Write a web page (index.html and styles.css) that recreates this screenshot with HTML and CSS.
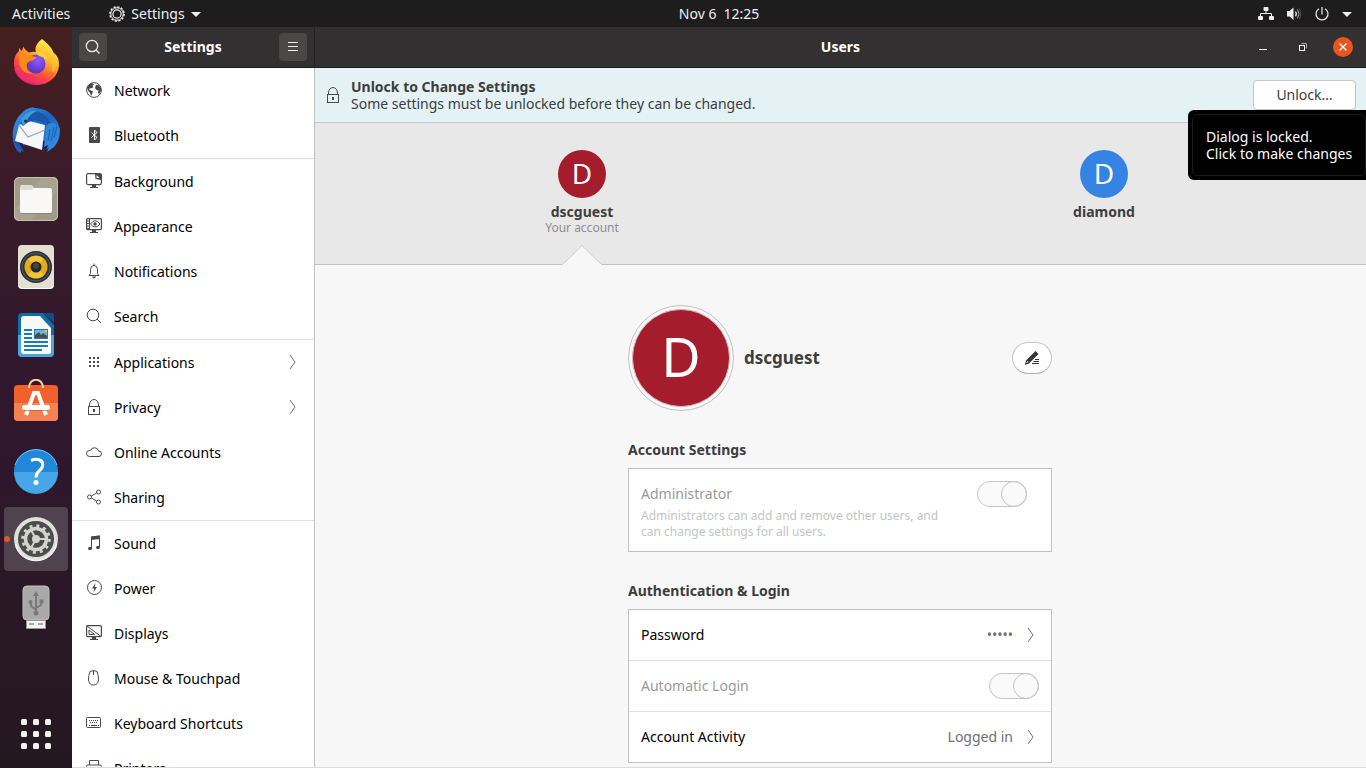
FILE: index.html
```html
<!DOCTYPE html>
<html lang="en">
<head>
<meta charset="utf-8">
<title>Settings - Users</title>
<meta name="viewport" content="width=device-width, initial-scale=1">
<link rel="stylesheet" href="styles.css">
</head>
<body>
<header class="topbar">
  <div class="topbar-left">
    <button class="top-btn">Activities</button>
    <button class="top-btn app-menu">
      <svg width="16" height="16" viewBox="0 0 16 16" fill="none" stroke="#eee"><circle cx="8" cy="8" r="7.1" stroke-width="1.5" stroke-dasharray="2.2 1.52"/><circle cx="8" cy="8" r="6.2"/><circle cx="8" cy="8" r="4.1" stroke-width="1.2"/></svg>
      Settings
      <svg width="10" height="16" viewBox="0 0 10 16"><path d="M0 6h10L5 11z" fill="#eee"/></svg>
    </button>
  </div>
  <button class="top-btn clock"><span>Nov 6</span><span>12:25</span></button>
  <button class="top-btn tray" aria-label="System menu">
    <svg width="16" height="16" viewBox="0 0 16 16" fill="#eee"><rect x="5.5" y="1" width="5" height="4" rx="1"/><rect x="0" y="10" width="5" height="4" rx="1"/><rect x="11" y="10" width="5" height="4" rx="1"/><path d="M2.5 10V7.5h11V10M8 5v3" fill="none" stroke="#eee"/></svg>
    <svg width="16" height="16" viewBox="0 0 16 16" fill="none" stroke="#eee"><path d="M1 5h2.5L7.500 1.500V14L3.500 10.500H1z" fill="#eee" stroke="none"/><path d="M9.500 5.500q1.600 2.300 0 4.800" stroke-width="1.300"/><path d="M11.500 3.500q3 4.300 0 8.800" stroke="#aaa"/><path d="M13 2.500q3.500 5.300 0 10.800" stroke="#555"/></svg>
    <svg width="16" height="16" viewBox="0 0 16 16" fill="none" stroke="#eee" stroke-width="1.200"><path d="M8 1v7.500M5 2.700a6 6 0 1 0 6 0"/></svg>
    <svg width="10" height="16" viewBox="0 0 10 16"><path d="M0 6h10L5 11z" fill="#eee"/></svg>
  </button>
</header>

<div class="desktop">
  <nav class="dock" aria-label="Applications">
    <button class="dock-item" aria-label="Firefox">
      <svg width="48" height="48" viewBox="0 0 48 48">
        <defs><linearGradient id="ff" x1=".85" y1=".1" x2=".3" y2="1"><stop offset="0" stop-color="#fff44f"/><stop offset=".35" stop-color="#ffb327"/><stop offset=".65" stop-color="#ff5634"/><stop offset="1" stop-color="#e3118b"/></linearGradient><radialGradient id="fp" cx=".6" cy=".3" r=".8"><stop offset="0" stop-color="#9059ff"/><stop offset="1" stop-color="#4f2fb5"/></radialGradient></defs>
        <path d="M30 0c5 4 10 9 11.500 13.500C45.500 17 47 20 47 25c0 12-10 21-22.500 21S2 36.500 2 24.500c0-6 2-10 5-12.500V9l3 3 1.500-4.500c1 3 3 4.500 5.500 6 2.500-.8 5-1 7-.5C22 8 26 3 30 0z" fill="url(#ff)"/>
        <path d="M42 14c5 11 1 22-9 26 7-5 9-12 6-20" fill="#ffc53a" opacity=".6"/>
        <circle cx="24" cy="25" r="9.500" fill="url(#fp)"/>
        <path d="M7 15c4-.5 8-.5 11 1.500 2 1 5 1 6.500 1.800-1 2-3 3-7 4-2 1.500-3 2-3 5 0 4 3 6.500 7 7C11 36 6 29 7 15z" fill="#ff8a16"/>
        <path d="M24 13c5-1 11 2 12 9-3-4-6-4-9-5-1-1-2-2.500-3-4z" fill="#ffd03a"/>
        <path d="M4 30c3 8 10 12 19 12s15-4 18-9" fill="none" stroke="#ff3a58" stroke-width="4" opacity=".45"/>
      </svg>
    </button>
    <button class="dock-item" aria-label="Thunderbird">
      <svg width="48" height="48" viewBox="0 0 48 48">
        <defs><linearGradient id="tb" x1="0" y1="0" x2="1" y2="1"><stop offset="0" stop-color="#3aa0e8"/><stop offset=".5" stop-color="#1a62c0"/><stop offset="1" stop-color="#3d9bea"/></linearGradient></defs>
        <path d="M10 6c2-3 6-5 12-6l-1 1c8 0 15 2 20 8 9 9 9 22 1 31l-7 5 2-5-6 5 1-5-20-2-4 8C-2 39-2 16 10 6z" fill="url(#tb)"/>
        <path d="M4 32c2 5 6 9 9 12-1-2-2-5-2-8l16 5 5 1c-2 3-3 4-5 5 8-3 11-9 11-16l-8 4z" fill="#211d57"/>
        <path d="M7 18l10-4 16 4-3 25L3 34z" fill="#f6f7fa"/><path d="M7 18l9 12 17-7" fill="none" stroke="#9ba1ad" stroke-width="1.200"/>
        <path d="M9 17C9 6 18 1 27 5c7 3 11 8 14 14-4 1-6 0-8-2-7-4-13-4-18-1l-4 3z" fill="#1d58a8"/>
        <path d="M9 13c3-7 9-10 16-9-5 2-8 5-10 9-1 3-2 4-4 6z" fill="#3c9de0"/><circle cx="13.500" cy="14" r="1.500" fill="#1e2440"/>
        <path d="M34 20l-2 20 4-2-1 4 10-11 3-9c-3-6-11-9-14-2z" fill="#2f86d8"/><path d="M38 22l-2 12m6-14-3 14m6-15-3 12" stroke="#1a5cb5" fill="none"/>
        <path d="M0 28l3 9 5 6 4 2-5-9-4-2z" fill="#1a57ae"/>
      </svg>
    </button>
    <button class="dock-item" aria-label="Files">
      <svg width="48" height="48" viewBox="0 0 48 48"><rect x="2" y="2" width="44" height="44" rx="5" fill="#a09a88"/><path d="M2 35L30 2h11q5 0 5 5v9L18 46H7q-5 0-5-5z" fill="#aea896" opacity=".6"/><rect x="2.500" y="2.500" width="43" height="43" rx="5" fill="none" stroke="#c5bfae"/><path d="M8 12q0-2 2-2h9q2 0 3 3l1 2H8z" fill="#dfdcd2"/><path d="M8 15h12l2-2h16q2 0 2 2v21q0 2-2 2H10q-2 0-2-2z" fill="#f9f8f6"/><path d="M9 38.500h30" stroke="#79745f" opacity=".5"/></svg>
    </button>
    <button class="dock-item" aria-label="Rhythmbox">
      <svg width="48" height="48" viewBox="0 0 48 48"><rect x="6" y="2" width="36" height="44" rx="4" fill="#e3dfd3"/><path d="M7 43q1 2.500 3 2.500h28q2 0 3-2.500" fill="none" stroke="#fff"/><circle cx="24" cy="24" r="16" fill="#303138"/><circle cx="24" cy="24" r="14" fill="none" stroke="#585b68"/><circle cx="24" cy="24" r="11.500" fill="#e3ad18"/><path d="M24 24L16 16a11.500 11.500 0 0 1 16 0zM24 24l8 8a11.500 11.500 0 0 1-16 0z" fill="#f3cf4c" opacity=".7"/><circle cx="24" cy="24" r="5.500" fill="#262626"/><circle cx="24" cy="23" r="3" fill="#454545"/></svg>
    </button>
    <button class="dock-item" aria-label="LibreOffice Writer">
      <svg width="48" height="48" viewBox="0 0 48 48"><path d="M10 2h21l11 12v28q0 4-4 4H10q-4 0-4-4V6q0-4 4-4z" fill="#0e6daa"/><path d="M6 24h36v18q0 4-4 4H10q-4 0-4-4z" fill="#4aa5dc"/><path d="M31 2h9q2 0 2 2v8z" fill="#0c4f80"/><path d="M12 5h16l11 12v24q0 2-2 2H12q-3 0-3-3V8q0-3 3-3z" fill="#f9f9f9"/><path d="M12 19h8M12 23h8M12 27h8M12 31h24M12 35h24M12 39h18" stroke="#1b7db8" stroke-width="2"/><rect x="22" y="18" width="14" height="10" fill="#1b7db8"/><rect x="23" y="19" width="12" height="8" fill="#69b6e4"/><path d="M32 19h3v3z" fill="#f5d525"/><path d="M23 27v-3l4-3 2 3 2-2 4 3v2z" fill="#4c4c4c"/></svg>
    </button>
    <button class="dock-item" aria-label="Ubuntu Software">
      <svg width="48" height="48" viewBox="0 0 48 48"><rect x="2" y="6" width="44" height="36" rx="4" fill="#f1612b"/><path d="M2 24h44v14q0 4-4 4H6q-4 0-4-4z" fill="#f58151"/><path d="M17 9C17-2 31-2 31 9" fill="none" stroke="#f4d5a0" stroke-width="2"/><path d="M14 36l8-22h4l8 22" fill="none" stroke="#fff" stroke-width="4"/><rect x="10" y="26" width="28" height="5" rx="2.500" fill="#fff"/><path d="M12 31.500h24" stroke="#c94c1c" opacity=".6"/></svg>
    </button>
    <button class="dock-item" aria-label="Help">
      <svg width="48" height="48" viewBox="0 0 48 48"><circle cx="24" cy="24" r="22" fill="#2187d8"/><path d="M2 25h44a22 22 0 0 1-44 0z" fill="#46a6e7"/><path d="M3 18a22 22 0 0 1 42 0" fill="none" stroke="#6dbaf2"/><path d="M19 13.500q5-2 8.500-.5c5 2 3.500 8 0 10.500-2.500 2-3.500 3.500-3.500 7" fill="none" stroke="#fff" stroke-width="3"/><circle cx="24" cy="35.500" r="2.500" fill="#fff"/></svg>
    </button>
    <button class="dock-item active" aria-label="Settings">
      <svg width="48" height="48" viewBox="0 0 48 48"><circle cx="24" cy="24" r="22" fill="#dededa"/><path d="M3.500 29a21 21 0 0 0 41 0" fill="none" stroke="#f2f2f0" stroke-width="1.500"/><circle cx="24" cy="24" r="18" fill="#4b4c4b"/><circle cx="24" cy="24" r="13.300" fill="none" stroke="#d3d3cf" stroke-width="3" stroke-dasharray="3 3.964"/><circle cx="24" cy="24" r="10.500" fill="none" stroke="#d3d3cf" stroke-width="3.500"/><circle cx="24" cy="24" r="4" fill="#d3d3cf"/><path d="M24 24h10M24 24l-5-9M24 24l-5 9" stroke="#d3d3cf" stroke-width="2"/></svg>
    </button>
    <button class="dock-item" aria-label="USB drive">
      <svg width="48" height="48" viewBox="0 0 48 48"><rect x="11" y="3" width="26" height="34" rx="4" fill="#a9a9a9" stroke="#c0c0c0"/><path d="M14.500 37.500h19v8h-19z" fill="#f3f3f3" stroke="#999"/><path d="M17 41h5m4 0h5" stroke="#a6a6a6" stroke-width="2"/><path d="M24 12v18M24 27l-5-4v-4M24 25l5-3v-4" fill="none" stroke="#7a7a7a" stroke-width="2"/><path d="M21 13h6l-3-5z" fill="#7a7a7a"/><circle cx="24" cy="30" r="2.500" fill="#7a7a7a"/><circle cx="18.500" cy="19" r="2" fill="#7a7a7a"/><rect x="27.500" y="16.500" width="4" height="4" fill="#7a7a7a"/></svg>
    </button>
    <button class="dock-item apps" aria-label="Show applications">
      <svg width="48" height="48" viewBox="0 0 48 48" fill="#f2f2f0"><rect x="9" y="9" width="6" height="6" rx="1.500"/><rect x="21" y="9" width="6" height="6" rx="1.500"/><rect x="33" y="9" width="6" height="6" rx="1.500"/><rect x="9" y="21" width="6" height="6" rx="1.500"/><rect x="21" y="21" width="6" height="6" rx="1.500"/><rect x="33" y="21" width="6" height="6" rx="1.500"/><rect x="9" y="33" width="6" height="6" rx="1.500"/><rect x="21" y="33" width="6" height="6" rx="1.500"/><rect x="33" y="33" width="6" height="6" rx="1.500"/></svg>
    </button>
  </nav>

  <div class="window">
    <aside class="side">
      <div class="titlebar">
        <button class="tool" aria-label="Search"><svg width="16" height="16" viewBox="0 0 16 16" fill="none" stroke="#eee" stroke-width="1.200"><circle cx="7" cy="7" r="5.700"/><path d="M11 11l3.500 3.500"/></svg></button>
        <h2 class="title">Settings</h2>
        <button class="tool" aria-label="Menu"><svg width="16" height="16" viewBox="0 0 16 16" stroke="#eee"><path d="M3 3.500h10M3 7.500h10M3 11.500h10"/></svg></button>
      </div>
      <nav class="nav" aria-label="Settings panels">
        <a class="nav-row" href="#network"><svg class="ic" viewBox="0 0 16 16"><circle cx="8" cy="8" r="7.400" fill="none" stroke="#4a4a4a"/><path d="M1 6C1.500 4 3 2 5.500 1.200L8 2 6.500 4l1 1L5 6.500 4 6 3 7.500l2 1L7 9.500 6 12l-.8 2L4 11 2 8.500zM10 3l3 .3 2 3L15 9l-1.800 3-1.200-1 .5-2.500L10.500 8 9 6z" fill="#4a4a4a"/></svg>Network</a>
        <a class="nav-row" href="#bluetooth"><svg class="ic" viewBox="0 0 16 16"><rect x="3" y="0" width="11" height="16" rx="1" fill="#4a4a4a"/><path d="M5.500 5.500l5.500 5-2.500 2.500V3L11 5.500l-5.500 5" fill="none" stroke="#fff"/></svg>Bluetooth</a>
        <hr class="nav-sep">
        <a class="nav-row" href="#background"><svg class="ic" viewBox="0 0 16 16"><rect x=".6" y=".6" width="14.800" height="11" rx="1.500" fill="none" stroke="#4a4a4a" stroke-width="1.200"/><path d="M9 1h6v6L9.500 6z" fill="#4a4a4a"/><path d="M10.500 2v3h3z" fill="#fff"/><path d="M6 12h4v2h2v1H4v-1h2z" fill="#4a4a4a"/></svg>Background</a>
        <a class="nav-row" href="#appearance"><svg class="ic" viewBox="0 0 16 16"><rect x=".6" y=".6" width="14.800" height="11" rx="1" fill="none" stroke="#4a4a4a" stroke-width="1.200"/><path d="M0 3h4M0 5.500h4M0 8h4M0 10.500h4M3.500 1v11" stroke="#4a4a4a"/><path d="M4.500 6Q9-.5 14 6 9 12 4.500 6z" fill="none" stroke="#4a4a4a"/><circle cx="9" cy="6" r="1.700" fill="#4a4a4a"/><path d="M6 12h4v2h2v1H4v-1h2z" fill="#4a4a4a"/></svg>Appearance</a>
        <a class="nav-row" href="#notifications"><svg class="ic line" viewBox="0 0 16 16"><path d="M3 12.500l1.500-2V6.500a3.500 4 0 0 1 7 0v4l1.500 2zM8 2.500v-2"/><path d="M6.500 14h3L8 15z" fill="#4a4a4a"/></svg>Notifications</a>
        <a class="nav-row" href="#search"><svg class="ic line" viewBox="0 0 16 16"><circle cx="7" cy="7" r="5.800"/><path d="M11 11l4 4"/></svg>Search</a>
        <hr class="nav-sep">
        <a class="nav-row" href="#applications"><svg class="ic" viewBox="0 0 16 16"><path d="M3 4h10M3 8h10M3 12h10" stroke="#4a4a4a" stroke-width="2" stroke-dasharray="2"/></svg>Applications<svg class="chev" viewBox="0 0 8 16"><path d="M1 1l5 7-5 7"/></svg></a>
        <a class="nav-row" href="#privacy"><svg class="ic line" viewBox="0 0 16 16"><rect x="2.500" y="7.500" width="11" height="8"/><path d="M3.500 7.500V6a4.500 5.500 0 0 1 9 0v1.500"/><path d="M8 10v3" stroke-width="2"/></svg>Privacy<svg class="chev" viewBox="0 0 8 16"><path d="M1 1l5 7-5 7"/></svg></a>
        <a class="nav-row" href="#online-accounts"><svg class="ic line" viewBox="0 0 16 16"><path d="M3.500 12.500a3 3 0 0 1 0-6c.5 0 1 .1 1 .1a4.200 4.200 0 0 1 8.100.5 2.700 2.700 0 0 1 .4 5.400z"/></svg>Online Accounts</a>
        <a class="nav-row" href="#sharing"><svg class="ic line" viewBox="0 0 16 16"><circle cx="3.500" cy="8" r="2"/><circle cx="12.500" cy="3" r="2"/><circle cx="12.500" cy="13" r="2"/><path d="M5.300 7l5.400-3M5.300 9l5.400 3"/></svg>Sharing</a>
        <hr class="nav-sep">
        <a class="nav-row" href="#sound"><svg class="ic" viewBox="0 0 16 16"><path d="M5.500 13V2l8-1v11" fill="none" stroke="#4a4a4a"/><path d="M5 1.500l9-1V4L5 5z" fill="#4a4a4a"/><ellipse cx="4" cy="13.500" rx="2" ry="1.700" fill="#4a4a4a"/><ellipse cx="12" cy="12.500" rx="2" ry="1.700" fill="#4a4a4a"/></svg>Sound</a>
        <a class="nav-row" href="#power"><svg class="ic line" viewBox="0 0 16 16"><circle cx="8.500" cy="7.500" r="7"/><path d="M9.500 3L6 8.500h2.200L7.500 12.500 11 7H8.800z" fill="#4a4a4a" stroke="none"/></svg>Power</a>
        <a class="nav-row" href="#displays"><svg class="ic" viewBox="0 0 16 16"><rect x=".6" y=".6" width="14.800" height="11" rx="1" fill="none" stroke="#4a4a4a" stroke-width="1.200"/><path d="M1 1l14 10.500M3 5v4.500h5.500z" fill="none" stroke="#4a4a4a"/><path d="M6 12h4v2h2v1H4v-1h2z" fill="#4a4a4a"/></svg>Displays</a>
        <a class="nav-row" href="#mouse"><svg class="ic line" viewBox="0 0 16 16"><path d="M4 1.500Q7.500-.5 11 1.500q1.500 4 1.500 7.500 0 6-5 6t-5-6q0-3.500 1.500-7.500zM7.500 1v4"/></svg>Mouse &amp; Touchpad</a>
        <a class="nav-row" href="#keyboard"><svg class="ic line" viewBox="0 0 16 16"><rect x=".5" y="2.500" width="14" height="10" rx="1"/><path d="M3 5.500h10M4 7.500h8" stroke-dasharray="1 1"/><path d="M3 10.500h1m1 0h6m1 0h1"/></svg>Keyboard Shortcuts</a>
        <a class="nav-row" href="#printers"><svg class="ic line" viewBox="0 0 16 16"><path d="M3.500 5V.500h9V5M2.500 12.500h-2v-6q0-1.500 1.500-1.500h12q1.500 0 1.500 1.500v6h-2M3.500 10.500h9v4h-9z"/></svg>Printers</a>
      </nav>
    </aside>

    <main class="main">
      <div class="titlebar main-titlebar">
        <h1 class="title">Users</h1>
        <div class="win-controls">
          <button class="win-btn" aria-label="Minimize"><svg width="20" height="20" viewBox="0 0 20 20"><path d="M6 12.500h8" stroke="#fff"/></svg></button>
          <button class="win-btn" aria-label="Restore"><svg width="20" height="20" viewBox="0 0 20 20" fill="none"><path d="M8.500 6.500h5v5" stroke="#aaa"/><rect x="6.500" y="8.500" width="5" height="5" stroke="#fff"/></svg></button>
          <button class="win-btn" aria-label="Close"><svg width="20" height="20" viewBox="0 0 20 20"><circle cx="10" cy="10" r="10" fill="#e95420"/><path d="M6.500 6.500l7 7M13.500 6.500l-7 7" stroke="#fff" stroke-width="1.400"/></svg></button>
        </div>
      </div>

      <div class="infobar">
        <svg class="ic line" viewBox="0 0 16 16"><rect x="2.500" y="7.500" width="11" height="8"/><path d="M3.500 7.500V6a4.500 5.500 0 0 1 9 0v1.500"/><path d="M8 10v3" stroke-width="2"/></svg>
        <div class="info-text"><strong>Unlock to Change Settings</strong><p>Some settings must be unlocked before they can be changed.</p></div>
        <div class="unlock-wrap">
          <button class="unlock" aria-describedby="tip">Unlock…</button>
          <div class="tooltip" id="tip" role="tooltip"><p>Dialog is locked.<br>Click to make changes</p></div>
        </div>
      </div>

      <div class="users">
        <button class="user selected"><span class="avatar red">D</span><strong>dscguest</strong><small>Your account</small><svg class="arrow" width="40" height="20" viewBox="0 0 40 20"><path d="M0 20L20 .500 40 20z" fill="#f7f7f7"/><path d="M.500 19.500L20 .700 39.500 19.500" fill="none" stroke="#cfcfcf"/></svg></button>
        <button class="user"><span class="avatar blue">D</span><strong>diamond</strong></button>
      </div>

      <div class="panel">
        <section class="profile">
          <button class="photo" aria-label="Change picture"><span class="photo-in">D</span></button>
          <strong class="name">dscguest</strong>
          <button class="edit" aria-label="Edit name"><svg width="16" height="16" viewBox="0 0 16 16"><path d="M1 15l1-4.500L11.500 1l3 3L5 13.500z" fill="#363636"/><path d="M2 13l1.500-2 1 1z" fill="#fff"/><path d="M11 9.500h4M9.500 11.500H15M8 13.500h7" stroke="#363636"/></svg></button>
        </section>

        <section class="group">
          <h2 class="heading">Account Settings</h2>
          <div class="card admin">
            <div class="admin-top"><label for="admin">Administrator</label><input class="switch" id="admin" type="checkbox" role="switch" checked disabled></div>
            <p class="desc">Administrators can add and remove other users, and can change settings for all users.</p>
          </div>
        </section>

        <section class="group">
          <h2 class="heading">Authentication &amp; Login</h2>
          <div class="card">
            <button class="row"><span>Password</span><span class="value dots">•••••</span><svg class="chev" viewBox="0 0 8 16"><path d="M1 1l5 7-5 7"/></svg></button>
            <div class="row off"><label for="auto">Automatic Login</label><input class="switch" id="auto" type="checkbox" role="switch" checked disabled></div>
            <button class="row"><span>Account Activity</span><span class="value">Logged in</span><svg class="chev" viewBox="0 0 8 16"><path d="M1 1l5 7-5 7"/></svg></button>
          </div>
        </section>
      </div>
    </main>
  </div>
</div>
</body>
</html>
```
FILE: styles.css
```css
* { box-sizing: border-box; }
body {
  margin: 0;
  height: 100vh;
  display: flex;
  flex-direction: column;
  overflow: hidden;
  font: 14px/17px "Noto Sans", "Open Sans", sans-serif;
  color: #3d3d3d;
  background: #fff;
}
button { font: inherit; color: inherit; background: none; border: 0; padding: 0; margin: 0; }
h1, h2, p, hr { margin: 0; }
svg { display: block; flex: none; }
.ic { width: 16px; height: 16px; }
.line { fill: none; stroke: #4a4a4a; }
.chev { width: 8px; height: 16px; fill: none; stroke: #707070; }

.topbar {
  flex: none;
  height: 27px;
  display: grid;
  grid-template-columns: 72px 1fr auto 1fr;
  align-items: center;
  background: #1d1d1d;
  color: #eee;
}
.topbar-left { grid-column: 1 / 3; display: flex; gap: 39px; padding-left: 12px; }
.top-btn { display: flex; align-items: center; white-space: nowrap; }
.app-menu { gap: 6px; }
.clock { gap: 7px; }
.tray { justify-self: end; gap: 12px; padding-right: 14px; }

.desktop { flex: 1; min-height: 0; display: flex; }
.dock {
  flex: none;
  width: 72px;
  display: flex;
  flex-direction: column;
  align-items: center;
  gap: 4px;
  padding: 4px 0 2px;
  background: linear-gradient(#46201f, #381a2b 25%, #2f172e 55%, #241820);
}
.dock-item { flex: none; width: 64px; height: 64px; display: grid; place-items: center; border-radius: 4px; }
.dock-item.active { position: relative; background: #514250; }
.dock-item.active::before {
  content: "";
  position: absolute;
  left: 0;
  top: 29px;
  width: 6px;
  height: 6px;
  border-radius: 50%;
  background: #e95420;
}
.apps { margin-top: auto; }

.window { flex: 1; min-width: 0; display: flex; border-bottom: 1px solid #dcdcdc; }
.side { flex: none; width: 243px; display: flex; flex-direction: column; border-right: 1px solid #c0c0c0; background: #fff; }
.titlebar {
  flex: none;
  height: 41px;
  display: flex;
  align-items: center;
  justify-content: space-between;
  padding: 0 7px;
  background: #323030;
  border-bottom: 1px solid #1c1b1b;
  color: #fff;
}
.side .titlebar { margin-right: -1px; border-right: 1px solid #232222; }
.title { font-size: 14px; line-height: 20px; font-weight: 700; }
.tool { width: 28px; height: 28px; display: grid; place-items: center; border-radius: 4px; background: #4a4847; }
.nav { flex: 1; min-height: 0; overflow: hidden; }
.nav-row { display: flex; align-items: center; gap: 12px; height: 45px; padding: 0 17px 0 14px; color: #000; text-decoration: none; }
.nav-row svg { margin-bottom: 1px; }
.nav-row .chev { margin-left: auto; }
.nav-sep { height: 1px; border: 0; background: #dfdfdf; }

.main { flex: 1; min-width: 0; display: flex; flex-direction: column; background: #f7f7f7; }
.main-titlebar { display: grid; grid-template-columns: 1fr auto 1fr; padding: 0 3px; }
.main-titlebar .title { grid-column: 2; }
.win-controls { justify-self: end; display: flex; }
.win-btn { width: 40px; height: 28px; display: grid; place-items: center; }

.infobar {
  flex: none;
  height: 55px;
  display: flex;
  align-items: center;
  gap: 10px;
  padding: 0 10px;
  background: #e4f1f5;
  border-bottom: 1px solid #c8c8c8;
}
.info-text { flex: 1; }
.unlock-wrap { position: relative; }
.unlock { width: 103px; height: 30px; padding-bottom: 2px; background: #fff; border: 1px solid #c5c5c5; border-radius: 4px; }
.tooltip {
  position: absolute;
  z-index: 2;
  top: 100%;
  right: -10px;
  width: 178px;
  padding: 4px 0 4px 4px;
  border-radius: 6px 0 0 6px;
  background: #000;
  color: #fff;
  white-space: nowrap;
}
.tooltip p { padding: 13px; border: 1px solid #1c1c1c; border-radius: 6px; }

.users {
  flex: none;
  height: 142px;
  display: grid;
  grid-template-columns: 1fr 1fr;
  padding: 0 1px 0 6px;
  background: #e8e8e8;
  border-bottom: 1px solid #c0c0c0;
}
.user { position: relative; display: flex; flex-direction: column; align-items: center; padding-top: 27px; }
.avatar { width: 48px; height: 48px; margin-bottom: 5px; border-radius: 50%; color: #fff; font-size: 28px; line-height: 46px; text-align: center; }
.red { background: #a51d2d; }
.blue { background: #3584e4; }
.user small { font-size: 12px; line-height: 16px; color: #8e8e8e; }
.arrow { position: absolute; left: calc(50% - 20px); bottom: -1px; }

.panel { flex: 1; min-height: 0; overflow: hidden; width: 425px; max-width: 100%; margin: 0 auto; padding: 40px 1px 0 0; }
.profile { display: flex; align-items: center; gap: 10px; margin-bottom: 29px; }
.photo { width: 106px; height: 106px; padding: 3px; border: 1px solid #c3c3c3; border-radius: 50%; }
.photo-in { display: block; height: 98px; border: 1px solid #d0b8bb; border-radius: 50%; background: #a51d2d; color: #fff; font-size: 54px; line-height: 92px; }
.name { flex: 1; font-size: 17px; line-height: 24px; }
.edit { width: 40px; height: 32px; display: grid; place-items: center; border: 1px solid #c3c3c3; border-bottom-color: #b0b0b0; border-radius: 16px; background: #fff; }
.heading { margin-bottom: 8px; font-size: 14px; line-height: 20px; font-weight: 700; }
.group { margin-bottom: 29px; }
.card { border: 1px solid #c1c1c1; background: #fff; }
.admin { padding: 12px 24px 11px 12px; color: #9a9a9a; }
.admin-top { display: flex; align-items: center; justify-content: space-between; }
.admin-top label, .row label { padding-bottom: 1px; }
.desc { width: 320px; margin-top: 1px; font-size: 12px; line-height: 16px; color: #c2c6c4; }
.switch {
  appearance: none;
  width: 50px;
  height: 26px;
  margin: 0;
  display: flex;
  justify-content: flex-end;
  border: 1px solid #c5c5c5;
  border-radius: 13px;
  background: #fafafa;
}
.switch::before { content: ""; flex: none; box-sizing: border-box; width: 26px; height: 26px; margin: -1px; border: 1px solid #c5c5c5; border-radius: 50%; }
.row { width: 100%; height: 50px; display: flex; align-items: center; justify-content: space-between; padding: 0 12px; color: #000; }
.row + .row { height: 51px; border-top: 1px solid #e0e0e0; }
.row.off { color: #9a9a9a; }
.row span { padding-bottom: 1px; }
.row .value { margin-left: auto; color: #707070; }
.row .chev { margin: 0 4px 0 14px; }
.row .dots { font-size: 14px; }
```
